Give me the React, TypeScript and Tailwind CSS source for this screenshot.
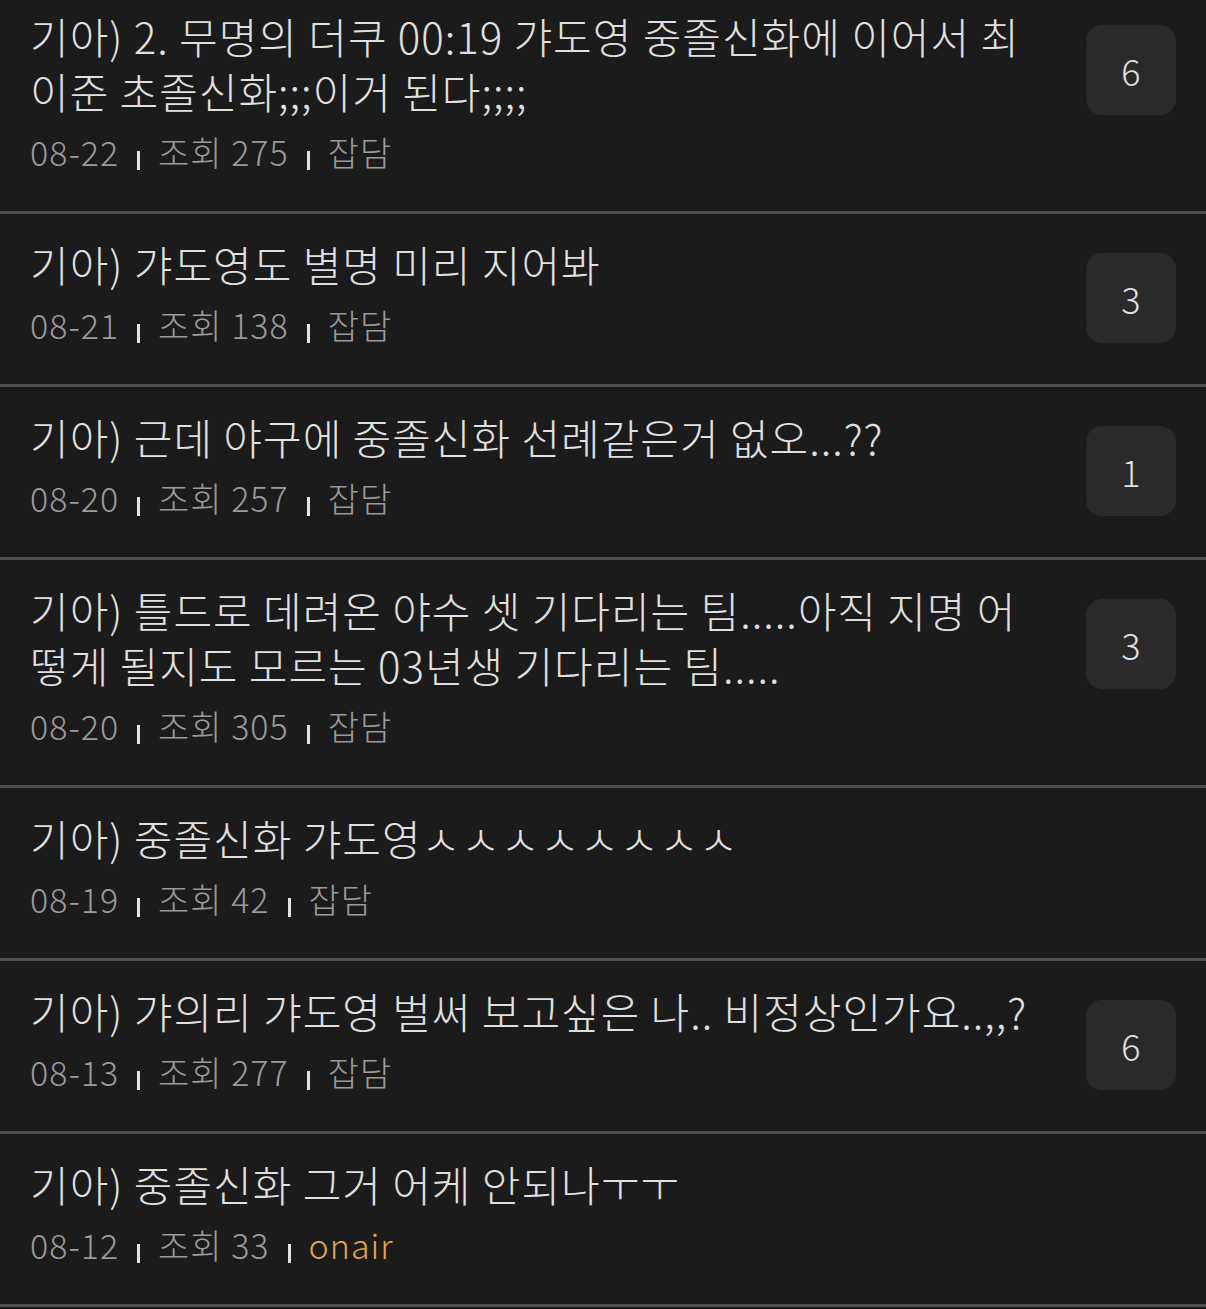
import React from 'react';

type Post = {
    id: number;
    lines: string[];
    date: string;
    views: number;
    category: string;
    comments?: number;
};

const posts: Post[] = [
    { id: 1, lines: ['기아) 2. 무명의 더쿠 00:19 갸도영 중졸신화에 이어서 최', '이준 초졸신화;;;이거 된다;;;;'], date: '08-22', views: 275, category: '잡담', comments: 6 },
    { id: 2, lines: ['기아) 갸도영도 별명 미리 지어봐'], date: '08-21', views: 138, category: '잡담', comments: 3 },
    { id: 3, lines: ['기아) 근데 야구에 중졸신화 선례같은거 없오...??'], date: '08-20', views: 257, category: '잡담', comments: 1 },
    { id: 4, lines: ['기아) 틀드로 데려온 야수 셋 기다리는 팀.....아직 지명 어', '떻게 될지도 모르는 03년생 기다리는 팀.....'], date: '08-20', views: 305, category: '잡담', comments: 3 },
    { id: 5, lines: ['기아) 중졸신화 갸도영ㅅㅅㅅㅅㅅㅅㅅㅅ'], date: '08-19', views: 42, category: '잡담' },
    { id: 6, lines: ['기아) 갸의리 갸도영 벌써 보고싶은 나.. 비정상인가요..,,?'], date: '08-13', views: 277, category: '잡담', comments: 6 },
    { id: 7, lines: ['기아) 중졸신화 그거 어케 안되나ㅜㅜ'], date: '08-12', views: 33, category: 'onair' },
];

function Divider() {
    return <span className="mx-[18px] mt-[17px] inline-block h-[19px] w-[3px] bg-[#e4e4e4]"></span>;
}

export default function App() {
    return (
        <div className="min-h-screen overflow-hidden bg-[#1b1b1b] font-['Noto_Sans_CJK_KR','Noto_Sans',sans-serif] font-light">
            <div className="-mt-[14px]">
                {posts.map((post) => (
                    <div key={post.id} className="flex items-start border-b-[3px] border-[#4f4f4f] pl-[30px] pr-[30px] pt-[22px] pb-[39px]">
                        <div className="min-w-0 flex-1">
                            <div className="text-[42px] leading-[55px] tracking-[1px] text-[#e0e0e0] whitespace-nowrap">
                                {post.lines.map((line, i) => (
                                    <div key={i}>{line}</div>
                                ))}
                            </div>
                            <div className="mt-[14px] flex items-center text-[34px] leading-[40px] tracking-[1px] text-[#9a9a9a]">
                                <span>{post.date}</span>
                                <Divider />
                                <span>조회 {post.views}</span>
                                <Divider />
                                <span className={post.category === 'onair' ? 'text-[#e8a54b]' : ''}>{post.category}</span>
                            </div>
                        </div>
                        {post.comments !== undefined && (
                            <div className="ml-[30px] mt-[17px] flex h-[90px] w-[90px] shrink-0 items-center justify-center rounded-[16px] bg-[#2a2a2a] text-[36px] font-light text-[#e0e0e0]">
                                {post.comments}
                            </div>
                        )}
                    </div>
                ))}
            </div>
        </div>
    );
}
